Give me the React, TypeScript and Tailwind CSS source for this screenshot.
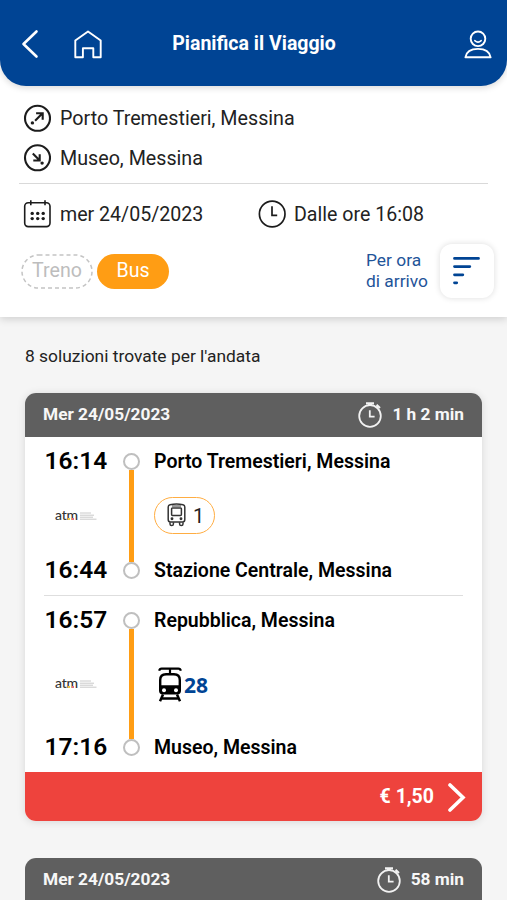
import type { ReactNode } from 'react';

type LegData = {
  departure: string;
  arrival: string;
  from: string;
  to: string;
  height: string;
  line: ReactNode;
};

function BackIcon() {
  return (
    <svg width="18" height="30" viewBox="0 0 18 30" fill="none" stroke="white" strokeWidth="2.6" strokeLinecap="round" strokeLinejoin="round">
      <path d="M15.5 2.5 L2.5 15 L15.5 27.5" />
    </svg>
  );
}

function HomeIcon() {
  return (
    <svg width="28" height="29" viewBox="0 0 28 29" fill="none" stroke="white" strokeWidth="1.9" strokeLinejoin="round">
      <path d="M1.3 27.3 V10.5 L14 1.5 L26.7 10.5 V27.3 H19.3 V18.3 H8.9 V27.3 Z" />
    </svg>
  );
}

function UserIcon() {
  return (
    <svg width="28" height="29" viewBox="0 0 28 29" fill="none" stroke="white" strokeWidth="1.9" strokeLinejoin="round" strokeLinecap="round">
      <circle cx="14" cy="8.8" r="7.3" />
      <path d="M10.8 10.6 Q14 13.6 17.2 10.6" strokeWidth="1.5" />
      <path d="M1.4 27.3 C2.4 21.5 7.5 18.9 14 18.9 C20.5 18.9 25.6 21.5 26.6 27.3 Z" />
    </svg>
  );
}

function FromIcon() {
  return (
    <svg width="28" height="28" viewBox="0 0 28 28" fill="none" stroke="#1c1c1c" strokeWidth="2.1">
      <circle cx="14.5" cy="14.3" r="12.5" />
      <path d="M12.1 16.7 L19.5 9.3 M13.1 9.2 H19.7 V15.8" />
      <circle cx="9.4" cy="18.9" r="1.7" fill="#1c1c1c" stroke="none" />
    </svg>
  );
}

function ToIcon() {
  return (
    <svg width="28" height="28" viewBox="0 0 28 28" fill="none" stroke="#1c1c1c" strokeWidth="2.1">
      <circle cx="14.5" cy="13.8" r="12.5" />
      <path d="M9.8 9.6 L16.5 16.3 M16.7 10.2 V16.5 H10.3" />
      <circle cx="19.1" cy="19.1" r="1.7" fill="#1c1c1c" stroke="none" />
    </svg>
  );
}

function CalendarIcon() {
  return (
    <svg width="28" height="28" viewBox="0 0 28 28" fill="none" stroke="#1c1c1c" strokeWidth="1.6">
      <rect x="1.7" y="2.8" width="25.3" height="23.8" rx="3.5" />
      <path d="M7.8 0.3 V5.2 M22 0.3 V5.2" />
      <g fill="#1c1c1c" stroke="none">
        <circle cx="9.2" cy="13.4" r="1.7" />
        <circle cx="14.7" cy="13.4" r="1.7" />
        <circle cx="20.2" cy="13.4" r="1.7" />
        <circle cx="9.2" cy="18.6" r="1.7" />
        <circle cx="14.7" cy="18.6" r="1.7" />
        <circle cx="20.2" cy="18.6" r="1.7" />
      </g>
    </svg>
  );
}

function ClockIcon() {
  return (
    <svg width="28" height="28" viewBox="0 0 28 28" fill="none" stroke="#1c1c1c" strokeWidth="1.7">
      <circle cx="14.2" cy="14" r="12.8" />
      <path d="M14 6.2 V15.3 H19.2" />
    </svg>
  );
}

function SortIcon() {
  return (
    <svg width="28" height="30" viewBox="0 0 28 30" fill="none" stroke="#004494" strokeWidth="2.8" strokeLinecap="round">
      <path d="M1.5 2.4 H25.5 M1.5 10.6 H16.8 M1.5 18.8 H9.8 M1.5 26.8 H3.7" />
    </svg>
  );
}

function StopwatchIcon() {
  return (
    <svg width="24" height="26" viewBox="0 0 24 26" fill="none" stroke="#f2f2f2" strokeWidth="1.8">
      <circle cx="12" cy="14" r="10.8" />
      <path d="M11.8 8.3 V14.6 H16.6" />
      <path d="M8 1.3 H16" strokeWidth="2.2" />
      <path d="M12 1.5 V4" strokeWidth="4" />
      <path d="M18.6 5.6 L20.2 4 M18.6 2.8 L22 6" strokeWidth="2" />
    </svg>
  );
}

function BusIcon() {
  return (
    <svg width="19" height="24" viewBox="0 0 19 24" fill="none" stroke="#333" strokeWidth="1.5" strokeLinejoin="round">
      <path d="M3 1.7 Q9.5 0.2 16 1.7 Q17.8 2.1 17.8 4 V16.5 Q17.8 19 15.5 19 H3.5 Q1.2 19 1.2 16.5 V4 Q1.2 2.1 3 1.7 Z" />
      <rect x="4.6" y="5" width="9.8" height="7.4" rx="0.8" />
      <path d="M5 3 H14" strokeWidth="1" />
      <circle cx="5" cy="15.8" r="0.7" />
      <circle cx="14" cy="15.8" r="0.7" />
      <path d="M3 19.3 V21 Q3 22.6 4.7 22.6 Q6.4 22.6 6.4 21 V19.3 M12.6 19.3 V21 Q12.6 22.6 14.3 22.6 Q16 22.6 16 21 V19.3" />
    </svg>
  );
}

function TramIcon() {
  return (
    <svg width="24" height="35" viewBox="0 0 24 35" fill="none" stroke="black">
      <path d="M1.2 3.8 Q1.6 1.6 3.6 1.6 H20.4 Q22.4 1.6 22.8 3.8" strokeWidth="2.2" />
      <path d="M12 2 V6.5" strokeWidth="2.2" />
      <path d="M8 6 H16 Q23 6 23 13 V23.6 Q23 27.6 19 27.6 H5 Q1 27.6 1 23.6 V13 Q1 6 8 6 Z" fill="black" stroke="none" />
      <path d="M8.5 8.6 H15.5 Q20.6 8.6 20.6 13 V18.2 H3.4 V13 Q3.4 8.6 8.5 8.6 Z" fill="white" stroke="none" />
      <circle cx="6" cy="23.3" r="2" fill="white" stroke="none" />
      <circle cx="18" cy="23.3" r="2" fill="white" stroke="none" />
      <path d="M5 27.5 L2 34.3 M19 27.5 L22 34.3 M3.6 31.6 H20.4" strokeWidth="2.5" />
    </svg>
  );
}

function AtmLogo() {
  return (
    <div className="ml-[11px] flex h-[14px] items-center gap-[2px]">
      <span className="relative -top-px font-['Lato',sans-serif] text-[14px] leading-[14px] font-medium tracking-[-0.2px] text-[#333]">
        atm
        <i className="absolute bottom-[2px] left-[13px] h-[2px] w-[2px] bg-[#e6c84c]" />
        <i className="absolute bottom-[2px] left-[17px] h-[2px] w-[2px] bg-[#dc6a86]" />
      </span>
      <svg width="17" height="8" viewBox="0 0 17 8" stroke="#bdbdbd" strokeWidth="0.8">
        <path d="M0 1 H11 M0 3.2 H14 M0 5.2 H13 M0 7.2 H16.5" />
      </svg>
    </div>
  );
}

function Leg({ departure, arrival, from, to, height, line }: LegData) {
  return (
    <div className={`flex whitespace-nowrap ${height}`}>
      <div className="flex w-[79px] flex-col justify-between text-[24.5px] font-semibold">
        <span className="h-[17px] pl-[0.5px] leading-[16px]">{departure}</span>
        <AtmLogo />
        <span className="h-[17px] pl-[0.5px] leading-[16px]">{arrival}</span>
      </div>
      <div className="flex w-[17px] flex-col items-center">
        <span className="h-[17px] w-[17px] rounded-full border-[2.5px] border-[#bfbfbf]" />
        <span className="w-[5px] flex-1 bg-[#ff9d14]" />
        <span className="h-[17px] w-[17px] rounded-full border-[2.5px] border-[#bfbfbf]" />
      </div>
      <div className="ml-[14px] flex flex-col items-start justify-between text-[19.5px] font-semibold">
        <span className="h-[17px] leading-[18px]">{from}</span>
        {line}
        <span className="h-[17px] leading-[18px]">{to}</span>
      </div>
    </div>
  );
}

function CardHeader({ date, duration }: { date: string; duration: string }) {
  return (
    <div className="flex h-11 items-center justify-between bg-[#5f5f5f] pr-[18px] pl-[18px] text-[17.3px] font-bold text-[#f7f7f7]">
      <span>{date}</span>
      <div className="flex items-center gap-[10px]">
        <StopwatchIcon />
        <span>{duration}</span>
      </div>
    </div>
  );
}

const legs: LegData[] = [
  {
    departure: '16:14',
    arrival: '16:44',
    from: 'Porto Tremestieri, Messina',
    to: 'Stazione Centrale, Messina',
    height: 'h-[126px]',
    line: (
      <div className="-mt-[2px] flex h-[37px] w-[61px] items-center gap-[7px] rounded-full border-[1.5px] border-[#ffad42] pl-[12px] text-[20px] font-normal text-[#222]">
        <BusIcon />
        <span className="pt-px">1</span>
      </div>
    ),
  },
  {
    departure: '16:57',
    arrival: '17:16',
    from: 'Repubblica, Messina',
    to: 'Museo, Messina',
    height: 'h-[144px]',
    line: (
      <div className="ml-[4px] flex items-center gap-[2px] font-['Open_Sans',sans-serif] text-[21px] leading-[35px] font-bold text-[#004494]">
        <TramIcon />
        <span className="h-[35px] leading-[37px]">28</span>
      </div>
    ),
  },
];

export default function App() {
  return (
    <main className="h-[900px] w-[507px] overflow-hidden bg-[#f5f5f5] font-['Roboto',sans-serif] text-black">
      <section className="h-[317px] bg-white shadow-[0_2px_8px_rgba(0,0,0,0.16)]">
        <header className="flex h-[86px] items-center rounded-b-[26px] bg-[#004494] pt-[2px] pr-[15px] pl-[21px] shadow-[0_2px_6px_rgba(0,0,0,0.15)]">
          <BackIcon />
          <div className="ml-[35px]">
            <HomeIcon />
          </div>
          <h1 className="flex-1 pr-[58px] text-center text-[19.5px] font-bold text-white">Pianifica il Viaggio</h1>
          <UserIcon />
        </header>

        <div className="px-[23px] text-[19.7px] text-[#222]">
          <div className="mt-[18px] flex h-[28px] items-center gap-[9px]">
            <FromIcon />
            <span className="pt-[2px]">Porto Tremestieri, Messina</span>
          </div>
          <div className="mt-[12px] flex h-[28px] items-center gap-[9px]">
            <ToIcon />
            <span className="pt-[2px]">Museo, Messina</span>
          </div>
        </div>

        <div className="mx-[19px] mt-[11px] h-px bg-[#d9d9d9]" />

        <div className="mt-[16px] flex h-[28px] items-center pl-[23px] text-[19.6px] text-[#222]">
          <div className="flex w-[235px] items-center gap-[9px]">
            <CalendarIcon />
            <span className="pt-[2px]">mer 24/05/2023</span>
          </div>
          <div className="flex items-center gap-[8px]">
            <ClockIcon />
            <span className="pt-[2px]">Dalle ore 16:08</span>
          </div>
        </div>

        {/* Filtri e ordinamento */}
        <div className="mt-[15px] flex h-[56px] items-center pr-[13px] pl-[21px]">
          <div className="flex h-[35px] w-[72px] items-center justify-center text-[19.6px] text-[#bdbdbd]">
            <svg className="absolute" width="72" height="35" viewBox="0 0 72 35" fill="none" stroke="#c4c4c4" strokeWidth="1.5" strokeDasharray="4 3">
              <rect x="1" y="1" width="70" height="33" rx="16.5" />
            </svg>
            <span className="pb-px">Treno</span>
          </div>
          <div className="ml-[4px] flex h-[35px] w-[72px] items-center justify-center rounded-full bg-[#ff9d14] pb-px text-[19.6px] text-white">Bus</div>
          <p className="ml-auto text-[17.4px] leading-[21px] text-[#1f5499]">
            Per ora
            <br />
            di arrivo
          </p>
          <button className="ml-[12px] flex h-[54px] w-[54px] items-center justify-center rounded-[12px] bg-white shadow-[0_0_6px_rgba(0,0,0,0.14)]">
            <SortIcon />
          </button>
        </div>
      </section>

      <section className="px-[25px]">
        <p className="mt-[27px] h-[24px] text-[17.4px] leading-[24px] text-[#222]">8 soluzioni trovate per l'andata</p>

        <article className="mt-[25px] overflow-hidden rounded-[11px] bg-white shadow-[0_1px_8px_rgba(0,0,0,0.12)]">
          <CardHeader date="Mer 24/05/2023" duration="1 h 2 min" />
          <div className="px-[19px] py-[16px]">
            <Leg {...legs[0]} />
            <div className="my-[16px] h-px bg-[#dedede]" />
            <Leg {...legs[1]} />
          </div>
          <div className="flex h-[49px] items-center justify-end gap-[13px] bg-[#ee433d] pr-[16px] text-[19.5px] font-bold text-white">
            <span>€ 1,50</span>
            <svg width="19" height="30" viewBox="0 0 19 30" fill="none" stroke="white" strokeWidth="3.6" strokeLinecap="round">
              <path d="M3 3 L16 15.5 L3 28" />
            </svg>
          </div>
        </article>

        <article className="mt-[37px] h-[200px] overflow-hidden rounded-t-[11px] bg-white">
          <CardHeader date="Mer 24/05/2023" duration="58 min" />
        </article>
      </section>
    </main>
  );
}
